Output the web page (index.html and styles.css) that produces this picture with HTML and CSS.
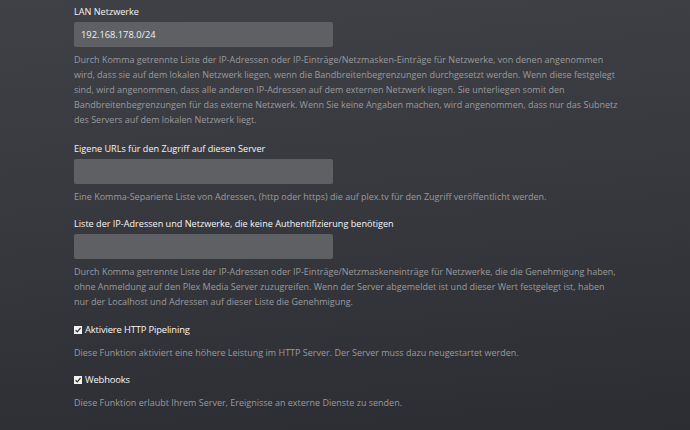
FILE: index.html
```html
<!DOCTYPE html>
<html lang="de">
<head>
<meta charset="utf-8">
<link rel="stylesheet" href="styles.css">
</head>
<body>
<div class="page">
  <div class="group g1">
    <div class="label">LAN Netzwerke</div>
    <div class="input">192.168.178.0/24</div>
    <p class="desc">Durch Komma getrennte Liste der IP-Adressen oder IP-Einträge/Netzmasken-Einträge für Netzwerke, von denen angenommen wird, dass sie auf dem lokalen Netzwerk liegen, wenn die Bandbreitenbegrenzungen durchgesetzt werden. Wenn diese festgelegt sind, wird angenommen, dass alle anderen IP-Adressen auf dem externen Netzwerk liegen. Sie unterliegen somit den Bandbreitenbegrenzungen für das externe Netzwerk. Wenn Sie keine Angaben machen, wird angenommen, dass nur das Subnetz des Servers auf dem lokalen Netzwerk liegt.</p>
  </div>
  <div class="group">
    <div class="label">Eigene URLs für den Zugriff auf diesen Server</div>
    <div class="input"></div>
    <p class="desc">Eine Komma-Separierte Liste von Adressen, (http oder https) die auf plex.tv für den Zugriff veröffentlicht werden.</p>
  </div>
  <div class="group g3">
    <div class="label">Liste der IP-Adressen und Netzwerke, die keine Authentifizierung benötigen</div>
    <div class="input"></div>
    <p class="desc">Durch Komma getrennte Liste der IP-Adressen oder IP-Einträge/Netzmaskeneinträge für Netzwerke, die die Genehmigung haben, ohne Anmeldung auf den Plex Media Server zuzugreifen. Wenn der Server abgemeldet ist und dieser Wert festgelegt ist, haben nur der Localhost und Adressen auf dieser Liste die Genehmigung.</p>
  </div>
  <div class="group">
    <div class="check"><span class="box"><svg viewBox="0 0 8 8" width="8" height="8"><rect x="0" y="0" width="8" height="8" fill="#f2f2f2"/><path d="M1.6 4.2 L3.3 5.9 L6.6 1.8" fill="none" stroke="#333" stroke-width="1.3"/></svg></span>Aktiviere HTTP Pipelining</div>
    <p class="desc cdesc">Diese Funktion aktiviert eine höhere Leistung im HTTP Server. Der Server muss dazu neugestartet werden.</p>
  </div>
  <div class="group">
    <div class="check"><span class="box"><svg viewBox="0 0 8 8" width="8" height="8"><rect x="0" y="0" width="8" height="8" fill="#f2f2f2"/><path d="M1.6 4.2 L3.3 5.9 L6.6 1.8" fill="none" stroke="#333" stroke-width="1.3"/></svg></span>Webhooks</div>
    <p class="desc cdesc">Diese Funktion erlaubt Ihrem Server, Ereignisse an externe Dienste zu senden.</p>
  </div>
</div>
</body>
</html>
```
FILE: styles.css
```css
html, body {
  margin: 0;
  padding: 0;
  height: 100%;
}
body {
  background: linear-gradient(175deg, #404146 0%, #37383d 50%, #2c2d33 100%);
  font-family: "Open Sans", "DejaVu Sans", sans-serif;
  overflow: hidden;
}
.page {
  padding: 4px 0 0 74px;
  width: 545px;
}
.group {
  margin-bottom: 12px;
}
.g1 {
  margin-bottom: 14px;
}
.g3 {
  margin-bottom: 13px;
}
.label {
  color: #f6f6f6;
  font-size: 9.1px;
  line-height: 15px;
}
.input {
  margin-top: 3px;
  width: 259px;
  height: 25px;
  background: #5f6064;
  border-radius: 2px;
  color: #f0f0f0;
  font-size: 9.3px;
  line-height: 25px;
  padding-left: 7px;
  box-sizing: border-box;
}
.desc {
  margin: 5px 0 0 0;
  color: #9a9a9d;
  font-size: 9px;
  line-height: 15px;
}
.check {
  color: #f6f6f6;
  font-size: 9.4px;
  letter-spacing: -0.15px;
  line-height: 15px;
  display: flex;
  align-items: center;
}
.box {
  display: inline-flex;
  width: 8px;
  height: 8px;
  margin-right: 3px;
}
.cdesc {
  margin-top: 8px;
}
```
